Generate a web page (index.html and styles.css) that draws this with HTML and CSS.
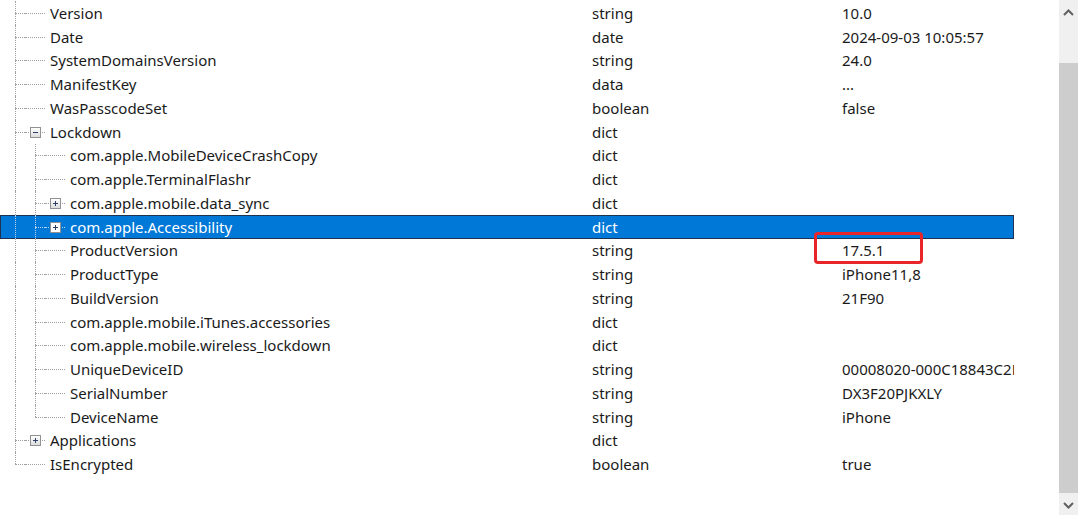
FILE: index.html
```html
<!DOCTYPE html>
<html>
<head>
<meta charset="utf-8">
<link rel="stylesheet" href="styles.css">
</head>
<body>
<div class="window">
  <div class="tree">
    <div class="row"><div class="name"><span class="conn"></span><span class="boxcol"></span><span class="label">Version</span></div><div class="type">string</div><div class="val">10.0</div></div>
    <div class="row"><div class="name"><span class="conn"></span><span class="boxcol"></span><span class="label">Date</span></div><div class="type">date</div><div class="val">2024-09-03 10:05:57</div></div>
    <div class="row"><div class="name"><span class="conn"></span><span class="boxcol"></span><span class="label">SystemDomainsVersion</span></div><div class="type">string</div><div class="val">24.0</div></div>
    <div class="row"><div class="name"><span class="conn"></span><span class="boxcol"></span><span class="label">ManifestKey</span></div><div class="type">data</div><div class="val">...</div></div>
    <div class="row"><div class="name"><span class="conn"></span><span class="boxcol"></span><span class="label">WasPasscodeSet</span></div><div class="type">boolean</div><div class="val">false</div></div>
    <div class="row"><div class="name"><span class="conn"></span><span class="boxcol"><i class="exp minus"></i></span><span class="label">Lockdown</span></div><div class="type">dict</div><div class="val"></div></div>
    <div class="row"><div class="name"><span class="guide"></span><span class="conn"></span><span class="boxcol"></span><span class="label">com.apple.MobileDeviceCrashCopy</span></div><div class="type">dict</div><div class="val"></div></div>
    <div class="row"><div class="name"><span class="guide"></span><span class="conn"></span><span class="boxcol"></span><span class="label">com.apple.TerminalFlashr</span></div><div class="type">dict</div><div class="val"></div></div>
    <div class="row"><div class="name"><span class="guide"></span><span class="conn"></span><span class="boxcol"><i class="exp plus"></i></span><span class="label">com.apple.mobile.data_sync</span></div><div class="type">dict</div><div class="val"></div></div>
    <div class="row selected"><div class="name"><span class="guide"></span><span class="conn"></span><span class="boxcol"><i class="exp plus"></i></span><span class="label">com.apple.Accessibility</span></div><div class="type">dict</div><div class="val"></div></div>
    <div class="row"><div class="name"><span class="guide"></span><span class="conn"></span><span class="boxcol"></span><span class="label">ProductVersion</span></div><div class="type">string</div><div class="val"><span class="marked">17.5.1</span></div></div>
    <div class="row"><div class="name"><span class="guide"></span><span class="conn"></span><span class="boxcol"></span><span class="label">ProductType</span></div><div class="type">string</div><div class="val">iPhone11,8</div></div>
    <div class="row"><div class="name"><span class="guide"></span><span class="conn"></span><span class="boxcol"></span><span class="label">BuildVersion</span></div><div class="type">string</div><div class="val">21F90</div></div>
    <div class="row"><div class="name"><span class="guide"></span><span class="conn"></span><span class="boxcol"></span><span class="label">com.apple.mobile.iTunes.accessories</span></div><div class="type">dict</div><div class="val"></div></div>
    <div class="row"><div class="name"><span class="guide"></span><span class="conn"></span><span class="boxcol"></span><span class="label">com.apple.mobile.wireless_lockdown</span></div><div class="type">dict</div><div class="val"></div></div>
    <div class="row"><div class="name"><span class="guide"></span><span class="conn"></span><span class="boxcol"></span><span class="label">UniqueDeviceID</span></div><div class="type">string</div><div class="val clip">00008020-000C18843C2E002E</div></div>
    <div class="row"><div class="name"><span class="guide"></span><span class="conn"></span><span class="boxcol"></span><span class="label">SerialNumber</span></div><div class="type">string</div><div class="val">DX3F20PJKXLY</div></div>
    <div class="row"><div class="name"><span class="guide"></span><span class="conn last"></span><span class="boxcol"></span><span class="label">DeviceName</span></div><div class="type">string</div><div class="val">iPhone</div></div>
    <div class="row"><div class="name"><span class="conn"></span><span class="boxcol"><i class="exp plus"></i></span><span class="label">Applications</span></div><div class="type">dict</div><div class="val"></div></div>
    <div class="row"><div class="name"><span class="conn last"></span><span class="boxcol"></span><span class="label">IsEncrypted</span></div><div class="type">boolean</div><div class="val">true</div></div>
  </div>
  <div class="scrollbar">
    <div class="sb-btn">
      <svg width="11" height="7" viewBox="0 0 11 7"><polyline points="1,6 5.5,1.5 10,6" fill="none" stroke="#606060" stroke-width="2"/></svg>
    </div>
    <div class="sb-track">
      <div class="sb-thumb"></div>
    </div>
    <div class="sb-btn">
      <svg width="11" height="7" viewBox="0 0 11 7"><polyline points="1,1 5.5,5.5 10,1" fill="none" stroke="#606060" stroke-width="2"/></svg>
    </div>
  </div>
</div>
</body>
</html>
```

FILE: styles.css
```css
html, body {
  margin: 0;
  padding: 0;
  background: #ffffff;
}

body {
  font-family: "Noto Sans", "Noto Sans CJK SC", sans-serif;
  font-size: 15px;
  color: #1a1a1a;
  overflow: hidden;
}

.window {
  display: flex;
  width: 1080px;
  height: 515px;
}

.tree {
  width: 1014px;
  padding-top: 1px;
  flex: none;
}

.row {
  display: grid;
  grid-template-columns: 592px 250px 172px;
  height: 23.75px;
  align-items: center;
  box-sizing: border-box;
  white-space: nowrap;
}

.row.selected {
  background: #0078d7;
  color: #ffffff;
  box-shadow: inset 0 0 0 1px #1d3350;
}

.name {
  display: flex;
  align-items: stretch;
  height: 100%;
  padding-left: 5px;
}

.guide,
.conn,
.boxcol {
  width: 20px;
  flex: none;
  position: relative;
}

.guide::before,
.conn::before {
  content: "";
  position: absolute;
  left: 10px;
  top: 0;
  bottom: 0;
  border-left: 1px dotted #a0a0a0;
}

.conn.last::before {
  bottom: 50%;
}

.conn::after {
  content: "";
  position: absolute;
  left: 10px;
  right: 0;
  top: 50%;
  border-top: 1px dotted #a0a0a0;
}

.boxcol {
  display: flex;
  align-items: center;
  justify-content: center;
}

.boxcol::before {
  content: "";
  position: absolute;
  left: 0;
  right: 0;
  top: 50%;
  border-top: 1px dotted #a0a0a0;
}

.selected .guide::before,
.selected .conn::before,
.selected .conn::after,
.selected .boxcol::before {
  border-color: #b8d6f2;
}

.exp {
  position: relative;
  z-index: 1;
  width: 9px;
  height: 9px;
  border: 1px solid #919191;
  background: linear-gradient(#ffffff, #dcdcdc);
  display: block;
  margin-top: 1px;
}

.exp::before {
  content: "";
  position: absolute;
  left: 2px;
  right: 2px;
  top: 4px;
  height: 1px;
  background: #2d3f63;
}

.exp.plus::after {
  content: "";
  position: absolute;
  top: 2px;
  bottom: 2px;
  left: 4px;
  width: 1px;
  background: #2d3f63;
}

.selected .exp {
  background: #ffffff;
}

.label {
  display: flex;
  align-items: center;
  padding-left: 5px;
}

.val.clip {
  overflow: hidden;
}

.marked {
  position: relative;
  display: inline-block;
}

.marked::after {
  content: "";
  position: absolute;
  left: -28px;
  top: -8px;
  width: 103px;
  height: 26px;
  border: 3px solid #e8262a;
  border-radius: 4px;
}

.scrollbar {
  margin-left: 45px;
  width: 19px;
  height: 515px;
  background: #f0f0f0;
  display: flex;
  flex-direction: column;
  flex: none;
}

.sb-btn {
  height: 24px;
  display: flex;
  align-items: center;
  justify-content: center;
  flex: none;
}

.sb-track {
  flex: 1;
  padding-top: 39px;
}

.sb-thumb {
  height: 430px;
  background: #cdcdcd;
}
```
